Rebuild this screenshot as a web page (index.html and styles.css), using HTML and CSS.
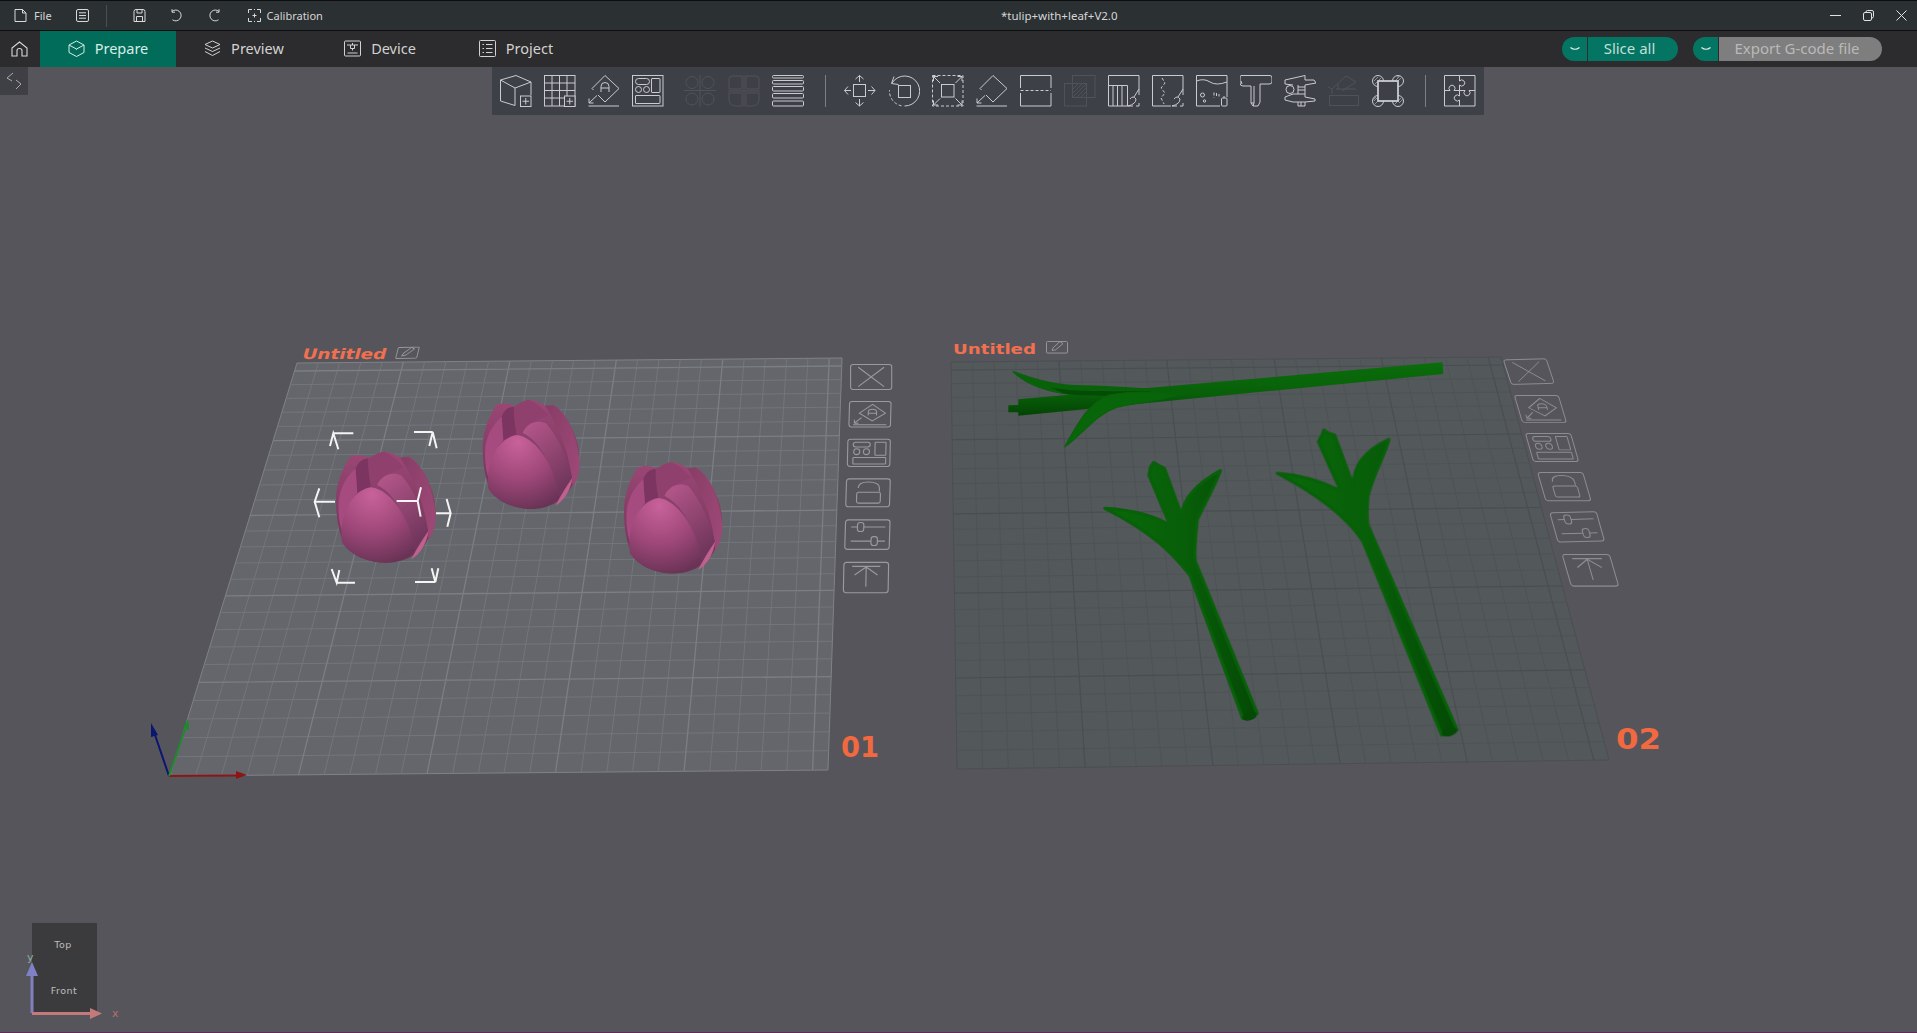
FILE: index.html
```html
<!DOCTYPE html>
<html lang="en">
<head>
<meta charset="utf-8">
<title>*tulip+with+leaf+V2.0</title>
<link rel="stylesheet" href="styles.css">
</head>
<body>
<header class="titlebar">
  <svg class="hi hi-file" viewBox="0 0 13 13"><path d="M1 .5H8.500L12 4V12.500H1ZM8.500 .5V4H12"/></svg>
  <span class="hi-label">File</span>
  <svg class="hi hi-doc" viewBox="0 0 13 13"><rect x=".5" y=".5" width="12" height="12" rx="1.500"/><path d="M3 3.800H10M3 6.500H10M3 9.200H10"/></svg>
  <span class="hi-sep"></span>
  <svg class="hi hi-save" viewBox="0 0 13 13"><path d="M1 2.500Q1 .5 3 .5H10Q12 .5 12 2.500V12.500H1ZM4 .5V4H9V.5M3.500 12.500V7.500H9.500V12.500"/></svg>
  <svg class="hi hi-undo" viewBox="0 0 13 13"><path d="M3 2.500A5.400 5.400 0 1 1 3.500 10.800M3 .2V3.200H6"/></svg>
  <svg class="hi hi-redo" viewBox="0 0 13 13"><path d="M10 2.500A5.400 5.400 0 1 0 9.500 10.800M10 .2V3.200H7"/></svg>
  <svg class="hi hi-cal" viewBox="0 0 13 13"><path d="M4 .5H.5V4M9 .5H12.500V4M4 12.500H.5V9M9 12.500H12.500V9M6.500 4.500V8.500M4.500 6.500H8.500M6 .5H7M6 12.500H7"/></svg>
  <span class="hi-label hi-label-cal">Calibration</span>
  <span class="doc-title">*tulip+with+leaf+V2.0</span>
  <div class="win-controls">
    <svg class="wc" viewBox="0 0 11 11"><path d="M0 5.500H11"/></svg>
    <svg class="wc" viewBox="0 0 11 11"><rect x=".5" y="2.500" width="8" height="8" rx="1.500"/><path d="M3 2.500V2Q3 .5 4.500 .5H9Q10.500 .5 10.500 2V6.500Q10.500 8 8.500 8"/></svg>
    <svg class="wc" viewBox="0 0 11 11"><path d="M.5 .5L10.500 10.500M10.500 .5L.5 10.500"/></svg>
  </div>
</header>

<nav class="tabs">
  <svg class="home" viewBox="0 0 17 16"><path d="M1 7L8.500 1L16 7V15H11V9.500Q11 7.500 8.500 7.500Q6 7.500 6 9.500V15H1Z"/></svg>
  <a class="tab tab-active">
    <svg class="tab-icon" viewBox="0 0 17 17"><path d="M8.500 1L16 5V12.500L8.500 16.500L1 12.500V5ZM1 5L8.500 9L16 5M8.500 9V9.800"/></svg>
    <span>Prepare</span>
  </a>
  <a class="tab">
    <svg class="tab-icon" viewBox="0 0 17 17"><path d="M8.500 1L16 4.500L8.500 8L1 4.500ZM1 8L8.500 11.500L16 8M1 11.500L8.500 15.500L16 11.500"/></svg>
    <span>Preview</span>
  </a>
  <a class="tab">
    <svg class="tab-icon" viewBox="0 0 17 17"><rect x=".5" y="1" width="16" height="15" rx="1"/><path d="M3 5H14M8.500 3V5M6.500 5V8.500H10.500V5M8.500 8.500V10.500M3.500 13H13.500"/></svg>
    <span>Device</span>
  </a>
  <a class="tab">
    <svg class="tab-icon" viewBox="0 0 17 17"><rect x=".5" y=".5" width="16" height="16" rx="1"/><path d="M3.500 4.500H5M7 4.500H13.500M3.500 8.500H5M7 8.500H13.500M3.500 12.500H5M7 12.500H13.500"/></svg>
    <span>Project</span>
  </a>
  <div class="actions">
    <div class="split">
      <span class="split-arrow"><svg class="chev" viewBox="0 0 10 5"><path d="M.5 .5Q5 4 9.500 .5"/></svg></span>
      <button class="split-main">Slice all</button>
    </div>
    <div class="split">
      <span class="split-arrow"><svg class="chev" viewBox="0 0 10 5"><path d="M.5 .5Q5 4 9.500 .5"/></svg></span>
      <button class="split-main split-main-off">Export G-code file</button>
    </div>
  </div>
</nav>

<main class="viewport">
  <svg class="canvas" viewBox="0 67 1917 965" aria-hidden="true">
    <defs>
      <filter id="soft" x="-5%" y="-5%" width="110%" height="110%" color-interpolation-filters="sRGB"><feGaussianBlur stdDeviation="1.500"/></filter>
      <radialGradient id="tFront" cx=".42" cy=".1" r=".98">
        <stop offset="0" stop-color="#c8629a"/><stop offset=".5" stop-color="#a0487a"/><stop offset="1" stop-color="#643152"/>
      </radialGradient>
      <linearGradient id="tMid" x1="0" y1="0" x2=".5" y2="1">
        <stop offset="0" stop-color="#b8588c"/><stop offset="1" stop-color="#70365b"/>
      </linearGradient>
      <linearGradient id="tBack" x1="0" y1="0" x2="0" y2="1">
        <stop offset="0" stop-color="#9c4775"/><stop offset="1" stop-color="#6a3355"/>
      </linearGradient>
      <linearGradient id="tRight" x1="0" y1="0" x2="1" y2=".6">
        <stop offset="0" stop-color="#863d66"/><stop offset="1" stop-color="#9c4775"/>
      </linearGradient>
      <linearGradient id="gStem" x1="0" y1="0" x2="1" y2="0">
        <stop offset="0" stop-color="#096a0a"/><stop offset=".5" stop-color="#085f09"/><stop offset="1" stop-color="#044a05"/>
      </linearGradient>
      <linearGradient id="gStemH" x1="0" y1="0" x2="0" y2="1">
        <stop offset="0" stop-color="#0a6e0b"/><stop offset=".6" stop-color="#085f09"/><stop offset="1" stop-color="#034404"/>
      </linearGradient>

      <g id="tulip" filter="url(#soft)">
        <path fill="url(#tBack)" d="M618,196C600,225 578,270 578,320C578,370 585,415 600,445C620,490 680,507 730,507C790,505 835,470 855,420C870,385 872,345 860,300C845,255 820,210 790,195L770,200C755,190 735,180 718,180C700,183 685,195 672,197C655,190 635,188 618,196Z"/>
        <path fill="#7c3560" d="M635,230C645,205 660,200 672,200C675,230 675,255 680,285L640,300Z"/>
        <path fill="#8f406c" d="M672,200C690,190 705,180 718,180C740,190 760,205 775,225C760,235 720,240 700,275L680,285C675,255 670,225 672,200Z"/>
        <path fill="url(#tRight)" d="M765,197L790,195C825,215 860,280 868,360C870,395 862,420 848,440C845,380 825,290 765,197Z"/>
        <path fill="url(#tMid)" d="M698,278C712,248 742,238 768,250C805,290 838,370 848,420L805,480C790,390 760,310 698,278Z"/>
        <path fill="#a64b7f" d="M635,230C610,250 585,290 585,340C585,380 592,405 600,425C600,370 615,330 640,300Z"/>
        <path fill="url(#tFront)" d="M680,285C730,290 790,360 808,470C790,495 745,508 705,506C655,500 610,475 595,445C590,400 600,350 625,320C640,300 660,288 680,285Z"/>
        <path fill="#c0608f" d="M848,412C842,450 825,480 797,497C805,480 825,445 848,412Z"/>
      </g>

      <g id="s-x"><rect x=".5" y=".5" width="35" height="23" rx="2"/><path d="M7 3L29 21M29 3L7 21"/></g>
      <g id="s-orient"><rect x=".5" y=".5" width="35" height="23" rx="2"/><path d="M20 3L31 11L20 18L9 11ZM16.500 13V10Q16.500 7.500 20 7.500Q23.500 7.500 23.500 10V13M16.500 11H23.500M5 20L11 15M5 20H8.500M5 20V17M4 21.500H32"/></g>
      <g id="s-arrange"><rect x=".5" y=".5" width="35" height="23" rx="2"/><rect x="5" y="3" width="14" height="4" rx="2"/><circle cx="8" cy="11" r="2.500"/><circle cx="16" cy="11" r="2.500"/><rect x="23" y="3" width="9" height="11" rx=".5"/><rect x="5" y="16" width="27" height="5.500" rx=".5"/></g>
      <g id="s-lock"><rect x=".5" y=".5" width="35" height="23" rx="2"/><rect x="9" y="11.500" width="19" height="9" rx="1.500"/><path d="M10 8Q10 3 18 3Q27 3 27 8V11"/></g>
      <g id="s-slide"><rect x=".5" y=".5" width="35" height="23" rx="2"/><path d="M5 6H10M15 6H32M5 17H21M26 17H32"/><rect x="10" y="2.500" width="5" height="7" rx="2"/><rect x="21" y="13.500" width="5" height="7" rx="2"/></g>
      <g id="s-top"><rect x=".5" y=".5" width="35" height="23" rx="2"/><path d="M7 3.500H29M18 4V19M18 4L9 10M18 4L27 10"/></g>
      <g id="s-edit"><rect x=".5" y=".5" width="21" height="11" rx="1"/><path d="M6 9L7 6.500L14 .5L17 2.500L9.500 8.500Z"/></g>
    </defs>

    <path class="plate plate-a" d="M297 363L842 358L828 770L170 776Z"/>
    <g id="grid-a" class="grid grid-a"></g>
    <path class="plate plate-b" d="M951 362L1501 357L1609 760L957 769Z"/>
    <g id="grid-b" class="grid grid-b"></g>

    <text class="plate-name" x="300.500" y="359" textLength="84" lengthAdjust="spacingAndGlyphs" transform="translate(97 0) skewX(-15)">Untitled</text>
    <use class="side-a" href="#s-edit" transform="matrix(1 -.02 -.25 1 398 347)"/>
    <text class="plate-name" x="953" y="354" textLength="83" lengthAdjust="spacingAndGlyphs">Untitled</text>
    <use class="side-a" href="#s-edit" transform="matrix(1 0 0 1.05 1046 341)"/>

    <text class="plate-num" x="841" y="757" textLength="38" lengthAdjust="spacingAndGlyphs">01</text>
    <text class="plate-num" x="1616" y="749" textLength="45" lengthAdjust="spacingAndGlyphs">02</text>

    <g class="side-a">
      <use href="#s-x" transform="matrix(1.175 0 0 1.083 850 364)"/>
      <use href="#s-orient" transform="matrix(1.186 0 -.03 1.11 849 401)"/>
      <use href="#s-arrange" transform="matrix(1.214 0 -.025 1.18 847.300 438.700)"/>
      <use href="#s-lock" transform="matrix(1.25 0 -.04 1.21 846 478.300)"/>
      <use href="#s-slide" transform="matrix(1.27 0 -.04 1.28 845 519.300)"/>
      <use href="#s-top" transform="matrix(1.278 0 -.025 1.32 843.300 561.700)"/>
    </g>
    <g class="side-b">
      <use href="#s-x" transform="matrix(1.222 -.033 .35 1.067 1502.600 359.400)"/>
      <use href="#s-orient" transform="matrix(1.256 0 .35 1.17 1513.600 394.900)"/>
      <use href="#s-arrange" transform="matrix(1.29 0 .35 1.22 1524.600 432.800)"/>
      <use href="#s-lock" transform="matrix(1.29 0 .358 1.225 1536.800 471.900)"/>
      <use href="#s-slide" transform="matrix(1.325 -.035 .358 1.27 1549 512.300)"/>
      <use href="#s-top" transform="matrix(1.35 0 .4 1.375 1561.300 553.800)"/>
    </g>

    <g transform="translate(290 340) scale(.3333)">
      <use href="#tulip" transform="translate(138 335) scale(1.03 1.02) translate(-578 -180)"/>
      <use href="#tulip"/>
      <use href="#tulip" transform="translate(1002 367) scale(1.015 1.02) translate(-578 -180)"/>
      <path class="select" d="M190 280H130M120 318L130 280L145 328M372 276H428M418 318L428 276L440 325M135 485H75M88 445L74 485L88 532M320 483H383M393 442L383 483L392 530M438 520H480M470 477L482 520L472 560M195 728H140M125 687L140 728L148 690M375 726H436M425 685L436 726L445 685"/>
    </g>

    <g class="leaves" filter="url(#soft)" transform="translate(950 330) scale(.3333)">
      <path fill="url(#gStemH)" d="M205,208L1478,97L1480,132L205,257L205,247L175,247L175,226L205,225Z"/>
      <path class="leaf" fill="#09620a" d="M190,125C260,150 320,168 400,168C470,170 540,172 610,180L700,192C600,197 480,200 380,195C300,188 230,165 190,125Z"/>
      <path fill="#044c05" d="M300,172C370,188 480,182 590,184L640,192C540,198 400,202 340,190Z"/>
      <path class="leaf" fill="#09650a" d="M345,350C385,275 420,215 480,195C560,180 620,185 680,195C640,212 560,218 500,232C440,252 400,310 345,350Z"/>
    </g>

    <g class="stems" filter="url(#soft)" transform="translate(1090 420) scale(.357 .3333)">
      <path fill="url(#gStem)" d="M42,265C120,270 190,290 225,318L165,165L170,140L178,128L190,135L208,145L258,290C255,240 300,190 365,152C350,200 320,250 300,300C295,360 290,400 295,425L468,880L428,895L280,465C230,400 180,340 42,265Z"/>
      <ellipse class="stem-end" cx="447" cy="889" rx="21" ry="12" transform="rotate(-18 447 889)"/>
      <path fill="url(#gStem)" d="M525,160C600,165 660,190 702,212L640,65L650,45L655,30L668,40L685,45L738,200C735,140 770,90 837,58C825,110 790,170 778,230C775,270 775,300 778,315L1028,930L985,945L765,365C720,290 640,225 525,160Z"/>
      <ellipse class="stem-end" cx="1007" cy="936" rx="22" ry="12" transform="rotate(-18 1007 936)"/>
    </g>

    <path class="axis-r" d="M169 776L238 775.500"/><path class="axis-rh" d="M236 771L247 775L236 779Z"/>
    <path class="axis-b" d="M169 776L154 732"/><path class="axis-bh" d="M151 723L158 735L151 737Z"/>
    <path class="axis-g" d="M169 776L185 729"/><path class="axis-gh" d="M188 719L189 730L183 728Z"/>

    <rect class="cube" x="32" y="923" width="65" height="89"/>
    <text class="cube-t" x="63" y="948">Top</text>
    <text class="cube-t" x="64" y="994">Front</text>
    <path class="gizmo-y" d="M32 1013V972"/><path class="gizmo-yh" d="M32 962L38 976H26Z"/>
    <text class="gizmo-yl" x="27" y="961">y</text>
    <path class="gizmo-x" d="M32 1013.500H92"/><path class="gizmo-xh" d="M102 1013.500L90 1008V1019Z"/>
    <text class="gizmo-xl" x="112" y="1017">x</text>
  </svg>

  <div class="panel-toggle">
    <svg class="toggle-icon" viewBox="0 0 16 18"><path d="M7 1L1 6L6 9M10 8L15 12L10 17"/></svg>
  </div>

  <div class="toolbar">
    <svg class="ti" viewBox="0 0 32 32"><path d="M.5 5L16 .5L31 7L15 13ZM.5 5V26L15 30.500V13M31 7V20"/><rect x="20.500" y="21" width="10.500" height="10.500"/><path d="M25.750 23V29.500M22.500 26.250H29"/></svg>
    <svg class="ti" viewBox="0 0 32 32"><rect x=".5" y=".5" width="30.500" height="30.500"/><path d="M8 .5V31M15.500 .5V31M23 .5V21M.5 8H31M.5 15.500H31M.5 23H20"/><rect class="ti-cut" x="20.500" y="21" width="10.500" height="10.500"/><path d="M25.750 23V29.500M22.500 26.250H29"/></svg>
    <svg class="ti" viewBox="0 0 32 32"><path d="M17 .5L31 13.500L17 27L10 20M5.500 15L4 13.500L17 .5M13 17V11.500Q13 7.500 17 7.500Q21 7.500 21 11.500V17M13 13H21M1 28L9 20.500M1 28H5.500M1 28V23.500M.5 31H31"/></svg>
    <svg class="ti" viewBox="0 0 32 32"><rect x=".5" y=".5" width="30.500" height="30.500"/><rect x="3.500" y="3.500" width="14" height="6" rx="3"/><circle cx="6.500" cy="14.500" r="3"/><circle cx="14.500" cy="14.500" r="3"/><rect x="19.500" y="3.500" width="8.500" height="14" rx=".5"/><rect x="3.500" y="20.500" width="24.500" height="8" rx=".5"/></svg>

    <svg class="ti ti-off ti-group" viewBox="0 0 32 32"><circle cx="8" cy="7.500" r="6"/><circle cx="24" cy="7.500" r="6"/><circle cx="8" cy="24" r="6"/><circle cx="24" cy="24" r="6"/><path d="M0 15.500H32M16 0V32"/></svg>
    <svg class="ti ti-off" viewBox="0 0 32 32"><path d="M14 1H4Q1 1 1 4V14H14ZM18 1H28Q31 1 31 4V14H18ZM14 31H8Q1 31 1 24V18H14ZM18 31H24Q31 31 31 24V18H18ZM0 16H32M16 0V32"/></svg>
    <svg class="ti" viewBox="0 0 32 32"><rect x=".5" y=".5" width="31" height="2.500" rx="1"/><rect x=".5" y="5.500" width="31" height="3.500" rx="1"/><rect x=".5" y="11.500" width="31" height="4.500" rx="1"/><rect x=".5" y="18.500" width="31" height="4.500" rx="1"/><rect x=".5" y="26" width="31" height="5" rx="1"/></svg>

    <span class="tool-sep"></span>

    <svg class="ti" viewBox="0 0 32 32"><rect x="9.500" y="9.500" width="12" height="12"/><path d="M15.500 .5V7M11.500 4L15.500 .5L19.500 4M15.500 24V31M11.500 27.500L15.500 31L19.500 27.500M.5 15.500H7M4 11.500L.5 15.500L4 19.500M24 15.500H31M27.500 11.500L31 15.500L27.500 19.500"/></svg>
    <svg class="ti" viewBox="0 0 32 32"><rect x="10.500" y="10.500" width="12" height="12"/><path d="M4 8A15 15 0 1 1 16.500 31M6 1.500L3.500 8.500L10.500 9.500"/><path class="ti-dash" d="M13.500 30.800A15 15 0 0 1 1.500 15"/></svg>
    <svg class="ti" viewBox="0 0 32 32"><rect class="ti-dash" x=".5" y=".5" width="30.500" height="30.500"/><rect x="9.500" y="9.500" width="12.500" height="12.500"/><path d="M1.500 1.500L8 8M1.500 6V1.500H6M30 1.500L23.500 8M25.500 1.500H30V6M1.500 30L8 23.500M1.500 25.500V30H6M30 30L23.500 23.500M30 25.500V30H25.500"/></svg>
    <svg class="ti" viewBox="0 0 32 32"><path d="M17 .5L31 13.500L17 27L10 20M5.500 15L4 13.500L17 .5M1 28L9 20.500M1 28H5.500M1 28V23.500M.5 31H31"/></svg>
    <svg class="ti" viewBox="0 0 32 32"><path d="M.5 13V.5H31V13M.5 18V31H31V18"/><path d="M.5 15.500H31" class="ti-dash"/></svg>
    <svg class="ti ti-off" viewBox="0 0 32 32"><rect x="8.500" y=".5" width="22.500" height="22"/><rect x=".5" y="8.500" width="22" height="22.500"/><path d="M9 22L22 9M9 18L18 9M9 14L14 9M13 22L22 13M17 22L22 17"/></svg>
    <svg class="ti" viewBox="0 0 32 32"><path d="M20 31H.5V.5H31V20M.5 10.500H19.500V31M5 10.500V31M9.500 10.500V31M14 10.500V31"/><path d="M31 14L26 22M22 24Q25 20 28 24Q28 29 20 31H25M31 28V31H28"/></svg>
    <svg class="ti" viewBox="0 0 32 32"><path d="M19 31H.5V.5H31V20"/><path class="ti-dash" d="M10 3L13 8L9 13L13 18L9 23L12 29"/><path d="M31 14L26 22M22 24Q25 20 28 24Q28 29 20 31H25M31 28V31H28"/></svg>
    <svg class="ti" viewBox="0 0 32 32"><path d="M24 31H.5V.5H31V22M.5 6Q8 3 14 7T31 7"/><circle cx="6.500" cy="20" r="2"/><circle cx="8.500" cy="26" r="1.200"/><rect x="25.500" y="23" width="5.500" height="8" rx="1"/><path d="M28 21V23"/><path class="ti-dash" d="M18 17.500V23M20.500 18V22.500M23 19V21.500"/></svg>
    <svg class="ti" viewBox="0 0 32 32"><path d="M1 .5H30Q32 .5 32 3V7Q32 9 29 9H20V27L18 31H13L11 28V11H3Q0 11 0 8V3Q0 .5 1 .5ZM1 6L2 9M11 28H14V11M14 28L13 31"/></svg>
    <svg class="ti" viewBox="0 0 32 32"><path d="M1 5L21 .5V5H30L32 8L21 10V22L31 24V26L21 27M1 5V9L9 10M1 22L9 19H21M1 22V25L9 27H21M14 10V19M14 27V31H21V27M17 27V31M21 12H14M21 15H14"/><circle cx="6" cy="14.500" r="4"/></svg>
    <svg class="ti ti-off" viewBox="0 0 32 32"><rect x="1.500" y="20.500" width="29" height="10"/><path d="M4 14L18 1L28 7L14 16M4 14L0 12M4 14V19M10 9V15M28 14H8"/></svg>
    <svg class="ti" viewBox="0 0 32 32"><circle cx="6" cy="6" r="5.500"/><circle cx="26" cy="6" r="5.500"/><circle cx="6" cy="26" r="5.500"/><circle cx="26" cy="26" r="5.500"/><path class="ti-hatch" d="M2 6L6 2M3 9L9 3M1 4L4 1M23 6L27 2M23 9L29 3M25 2L29 1M2 26L6 22M3 29L9 23M1 25L4 22M22 26L26 22M23 29L29 23M27 28L31 24"/><rect class="ti-frame" x="6" y="6" width="20" height="20"/></svg>

    <span class="tool-sep"></span>

    <svg class="ti" viewBox="0 0 32 32"><path d="M.5 .5H31V31H.5ZM15.500 .5V6A3 3 0 1 1 15.500 10V15.500M.5 15.500H6A3 3 0 1 1 10 15.500H15.500M15.500 15.500V21A3 3 0 1 0 15.500 25V31M15.500 15.500H21A3 3 0 1 0 25 15.500H31"/></svg>
  </div>
</main>
<script src="grid.js"></script>
</body>
</html>
```
FILE: styles.css
```css
* { box-sizing: border-box; }
html, body { margin: 0; height: 100%; }
body {
  display: flex;
  flex-direction: column;
  overflow: hidden;
  background: #56555c;
  font-family: "Noto Sans", "Open Sans", sans-serif;
  color: #d6d6d6;
}

/* title bar */
.titlebar {
  flex: 0 0 31px;
  display: flex;
  align-items: center;
  padding-left: 14px;
  background: #2b3033;
  border-top: 1px solid #0c0d0e;
  border-bottom: 1px solid #0c0d0e;
  font-size: 11px;
}
.hi { width: 13px; height: 13px; flex: none; fill: none; stroke: #d9d9d9; stroke-width: 1; }
.hi-label { margin-left: 7px; }
.hi-label-cal { margin-left: 6px; }
.hi-doc { margin-left: 24px; }
.hi-sep { width: 1px; height: 22px; margin-left: 17px; background: #4b4f52; }
.hi-save { margin-left: 26px; }
.hi-undo { margin-left: 23px; }
.hi-redo { margin-left: 27px; }
.hi-cal { margin-left: 26px; }
.doc-title { margin-left: 678px; font-size: 11.500px; }
.win-controls { margin-left: auto; display: flex; gap: 22px; padding-right: 10px; }
.wc { width: 11px; height: 11px; fill: none; stroke: #e2e2e2; stroke-width: 1; }

/* tab row */
.tabs {
  flex: 0 0 36px;
  display: flex;
  align-items: stretch;
  background: #2c2b2d;
  font-size: 14.500px;
}
.home { width: 17px; height: 16px; margin: 10px 12px 0 11px; fill: none; stroke: #d9d9d9; stroke-width: 1.100; }
.tab {
  width: 136px;
  padding-bottom: 2px;
  display: flex;
  align-items: center;
  justify-content: center;
  gap: 10px;
  color: #d2d2d2;
}
.tab-active { background: #026c5b; color: #d7ece6; }
.tab-icon { width: 17px; height: 17px; fill: none; stroke: currentColor; stroke-width: 1; }
.actions {
  margin-left: auto;
  padding-right: 35px;
  display: flex;
  align-items: center;
  gap: 15px;
}
.split { display: flex; height: 24px; gap: 1px; }
.split-arrow {
  width: 25px;
  display: flex;
  align-items: center;
  justify-content: center;
  background: #037562;
  border-radius: 12px 0 0 12px;
}
.chev { width: 10px; height: 5px; fill: none; stroke: #e6f2ef; stroke-width: 1.200; }
.split-main {
  width: 90px;
  padding: 0 7px 2px 0;
  border: 0;
  border-radius: 0 12px 12px 0;
  background: #037562;
  color: #c4dfd8;
  font: inherit;
  font-size: 15px;
}
.split-main-off { width: 163px; background: #7e7e7e; color: #b9b9b9; }

/* 3D viewport */
.viewport {
  flex: 1;
  position: relative;
  border-bottom: 1px solid #5c2b58;
}
.canvas { position: absolute; inset: 0; width: 100%; height: 100%; display: block; }

.plate-a { fill: #64666c; stroke: #808287; stroke-width: 1; }
.plate-b { fill: #53585a; stroke: #4b4e53; stroke-width: 1; }
.grid path { fill: none; }
.grid-a .minor { stroke: #74777d; stroke-width: .9; }
.grid-a .major { stroke: #7b7e84; stroke-width: 1.300; }
.grid-b .minor { stroke: #4e5257; stroke-width: .9; }
.grid-b .major { stroke: #4a4e53; stroke-width: 1.200; }

.plate-name {
  font-family: "DejaVu Sans", sans-serif;
  font-weight: 700;
  font-size: 14.500px;
  fill: #f0704f;
}
.plate-num {
  font-family: "DejaVu Sans", sans-serif;
  font-weight: 700;
  font-size: 29px;
  fill: #f2693f;
}
.side-a { fill: none; stroke: #9a9a9e; stroke-width: .9; }
.side-b { fill: none; stroke: #8c8d92; stroke-width: .8; }
.select { fill: none; stroke: #f4f4f4; stroke-width: 6; }
.stem-end { fill: #044a05; }
.stems path, .leaves path { stroke-linejoin: round; }
.stems > path { stroke: #086009; stroke-width: 9; }
.leaf { stroke: #09620a; stroke-width: 4; }

.axis-r { stroke: #8c1616; stroke-width: 2; }
.axis-rh { fill: #8c1616; }
.axis-b { stroke: #0b1670; stroke-width: 2; }
.axis-bh { fill: #0b1670; }
.axis-g { stroke: #1c8a2a; stroke-width: 2; }
.axis-gh { fill: #1c8a2a; }

.cube { fill: #3b3b3d; }
.cube-t {
  font-family: "DejaVu Sans", sans-serif;
  font-size: 9.500px;
  fill: #bdbdbd;
  text-anchor: middle;
  letter-spacing: .5px;
}
.gizmo-y { stroke: #8080bf; stroke-width: 3; }
.gizmo-yh { fill: #8080c6; }
.gizmo-x { stroke: #c47a7a; stroke-width: 3; }
.gizmo-xh { fill: #c47a7a; }
.gizmo-yl { font: 11px "DejaVu Sans", sans-serif; fill: #8ab29a; }
.gizmo-xl { font: 11px "DejaVu Sans", sans-serif; fill: #b56f6f; }

/* overlays on the viewport */
.panel-toggle {
  position: absolute;
  left: 0;
  top: 0;
  width: 28px;
  height: 28px;
  background: #3e4046;
  display: flex;
  align-items: center;
  justify-content: center;
}
.toggle-icon { width: 16px; height: 18px; fill: none; stroke: #a9abaf; stroke-width: 1; }

.toolbar {
  position: absolute;
  left: 492px;
  top: 0;
  width: 992px;
  height: 48px;
  background: #3e4047;
  display: flex;
  align-items: center;
  gap: 12px;
  padding-left: 8px;
}
.ti { width: 32px; height: 32px; flex: none; fill: none; stroke: #c9cbce; stroke-width: 1; }
.ti-off { stroke: #505259; }
.ti-group { margin-left: 8px; }
.ti-cut { fill: #3e4047; }
.ti-dash { stroke-dasharray: 3 2; }
.ti-hatch { stroke: #8f9195; }
.ti-frame { stroke-width: 1.800; fill: #3e4047; }
.tool-sep { width: 1px; height: 32px; margin: 0 6px 0 9px; background: #7d7f84; flex: none; }
```
FILE: grid.js
```js
// Perspective grid of a 256 mm build plate, one line every 10 mm, a heavier one every 50 mm.
function quadMap(p) {
  var x0 = p[0][0], y0 = p[0][1], x1 = p[1][0], y1 = p[1][1];
  var x2 = p[2][0], y2 = p[2][1], x3 = p[3][0], y3 = p[3][1];
  var dx1 = x1 - x2, dx2 = x3 - x2, dx3 = x0 - x1 + x2 - x3;
  var dy1 = y1 - y2, dy2 = y3 - y2, dy3 = y0 - y1 + y2 - y3;
  var den = dx1 * dy2 - dx2 * dy1;
  var g = (dx3 * dy2 - dx2 * dy3) / den;
  var h = (dx1 * dy3 - dx3 * dy1) / den;
  var a = x1 - x0 + g * x1, b = x3 - x0 + h * x3;
  var d = y1 - y0 + g * y1, e = y3 - y0 + h * y3;
  return function (u, v) {
    var w = g * u + h * v + 1;
    return ((a * u + b * v + x0) / w).toFixed(1) + " " + ((d * u + e * v + y0) / w).toFixed(1);
  };
}

function drawGrid(id, corners) {
  var map = quadMap(corners);
  var minor = "", major = "";
  for (var k = 1; k <= 25; k++) {
    var t = (k * 10) / 256;
    var seg = "M" + map(t, 0) + "L" + map(t, 1) + "M" + map(0, t) + "L" + map(1, t);
    if (k % 5 === 0) major += seg; else minor += seg;
  }
  var ns = "http://www.w3.org/2000/svg";
  var group = document.getElementById(id);
  [["minor", minor], ["major", major]].forEach(function (item) {
    var path = document.createElementNS(ns, "path");
    path.setAttribute("class", item[0]);
    path.setAttribute("d", item[1]);
    group.appendChild(path);
  });
}

// corners: origin (bottom-left), bottom-right, top-right, top-left
drawGrid("grid-a", [[170, 776], [828, 770], [842, 358], [297, 363]]);
drawGrid("grid-b", [[957, 769], [1609, 760], [1501, 357], [951, 362]]);
```
